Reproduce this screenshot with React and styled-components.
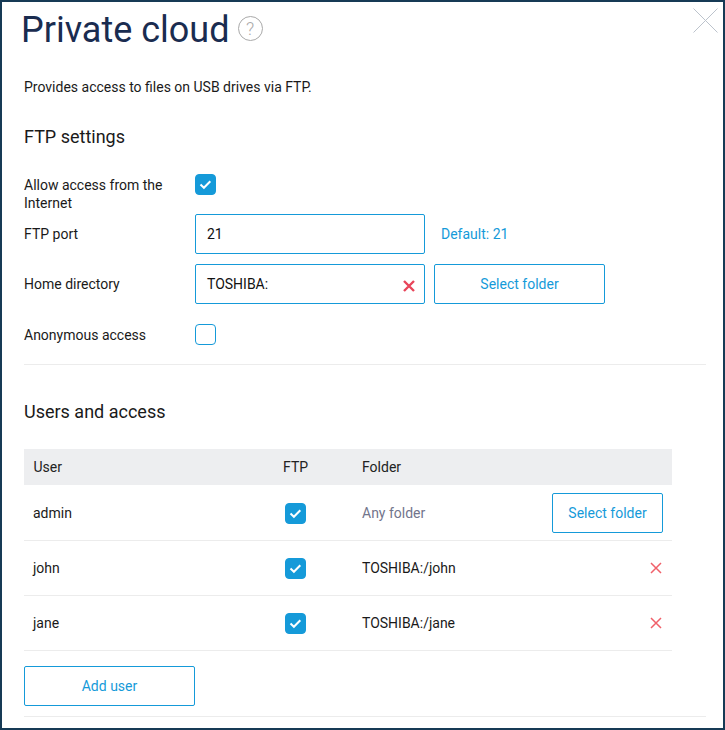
import React from 'react';
import styled, { createGlobalStyle } from 'styled-components';

const GlobalStyle = createGlobalStyle`
  html, body {
    margin: 0;
    padding: 0;
    background: #fff;
  }
  body {
    font-family: Roboto, "Liberation Sans", sans-serif;
    font-size: 14px;
    color: #1a1a1a;
  }
`;

const blue = '#159ad9';

const Popup = styled.div`
  position: relative;
  box-sizing: border-box;
  width: 725px;
  height: 730px;
  border: 2px solid #163a55;
  padding: 0 17px 0 22px;
  overflow: hidden;
  background: #fff;
`;

const TitleRow = styled.div`
  display: flex;
  align-items: center;
  gap: 8px;
  height: 54px;
  margin-left: -3px;
  padding-top: 1px;
`;

const Title = styled.h1`
  margin: 0;
  font-size: 36px;
  font-weight: 400;
  line-height: 54px;
  color: #1a2c50;
`;

const Help = styled.span`
  display: flex;
  align-items: center;
  justify-content: center;
  box-sizing: border-box;
  width: 25px;
  height: 25px;
  margin-top: -3px;
  border: 1px solid #a9a9a9;
  border-radius: 50%;
  font-size: 18px;
  font-weight: 300;
  color: #a9a9a9;
`;

const Close = styled.button`
  position: absolute;
  top: 6px;
  right: 5px;
  width: 25px;
  height: 25px;
  padding: 0;
  border: 0;
  background: none;
`;

const Intro = styled.p`
  margin: 21px 0 0;
  line-height: 18px;
`;

const Heading = styled.h2`
  margin: ${p => p.$top}px 0 0;
  font-size: 18px;
  font-weight: 400;
  line-height: 26px;
`;

const Form = styled.div`
  display: flex;
  flex-direction: column;
  margin-top: 26px;
`;

const FormRow = styled.div`
  display: flex;
  align-items: ${p => (p.$top ? 'flex-start' : 'center')};
  margin-top: ${p => p.$gap || 0}px;
`;

const Label = styled.div`
  flex: none;
  width: 171px;
  padding-right: 20px;
  box-sizing: border-box;
  line-height: 18px;
`;

const Input = styled.div`
  position: relative;
  display: flex;
  align-items: center;
  box-sizing: border-box;
  width: 230px;
  height: 40px;
  padding: 0 11px;
  border: 1px solid ${blue};
  border-radius: 2px;
  color: #111;
`;

const Clear = styled.span`
  position: absolute;
  top: 15px;
  right: 9px;
  display: flex;
`;

const Hint = styled.span`
  margin-left: 16px;
  color: ${blue};
`;

const Button = styled.button`
  box-sizing: border-box;
  width: ${p => p.$width}px;
  height: 40px;
  margin-left: ${p => p.$left || 0}px;
  padding: 0;
  border: 1px solid ${blue};
  border-radius: 2px;
  background: #fff;
  color: ${blue};
  font: inherit;
`;

const Box = styled.span`
  display: flex;
  align-items: center;
  justify-content: center;
  box-sizing: border-box;
  width: 21px;
  height: 21px;
  margin-top: ${p => p.$top || 0}px;
  border: 1px solid ${blue};
  border-radius: 4px;
  background: ${p => (p.$on ? blue : '#fff')};
`;

const Divider = styled.div`
  height: 1px;
  margin-top: ${p => p.$top}px;
  background: #ececec;
`;

const Table = styled.div`
  width: 648px;
  margin-top: 24px;
`;

const Row = styled.div`
  display: grid;
  grid-template-columns: 250px 79px 1fr auto;
  align-items: center;
  box-sizing: border-box;
  height: ${p => p.$height}px;
  padding: 0 9px;
  background: ${p => (p.$head ? '#edeef0' : '#fff')};
  border-bottom: ${p => (p.$head ? '0' : '1px solid #ececec')};
`;

const HeadCell = styled.div`
  color: #222;
  padding-left: ${p => p.$pad || 0}px;
`;

const CheckCell = styled.div`
  padding: 1px 0 0 2px;
`;

const Folder = styled.div`
  color: ${p => (p.$muted ? '#72758c' : '#1a1a1a')};
`;

const Remove = styled.span`
  display: flex;
  margin-right: 1px;
`;

const Footer = styled.div`
  margin-top: 15px;
`;

const Check = () => (
  <svg width="13" height="11" viewBox="0 0 13 11" fill="none">
    <path d="M1.5 5.6 L4.9 8.8 L11.3 2.2" stroke="#fff" strokeWidth="2" />
  </svg>
);

const Cross = ({ size, color, width }) => (
  <svg width={size} height={size} viewBox="0 0 12 12" fill="none">
    <path d="M1 1 L11 11 M11 1 L1 11" stroke={color} strokeWidth={width} />
  </svg>
);

const users = [
  { name: 'john', folder: 'TOSHIBA:/john' },
  { name: 'jane', folder: 'TOSHIBA:/jane' },
];

export default function App() {
  return (
    <>
      <GlobalStyle />
      <Popup>
        <TitleRow>
          <Title>Private cloud</Title>
          <Help>?</Help>
        </TitleRow>
        <Close aria-label="Close">
          <svg width="25" height="25" viewBox="0 0 25 25" fill="none">
            <path d="M0.5 0.5 L24.5 24.5 M24.5 0.5 L0.5 24.5" stroke="#bcc3cc" strokeWidth="1" />
          </svg>
        </Close>

        <Intro>Provides access to files on USB drives via FTP.</Intro>

        <Heading $top={28}>FTP settings</Heading>
        <Form>
          <FormRow $top>
            <Label>Allow access from the Internet</Label>
            <Box $on $top={-2}><Check /></Box>
          </FormRow>
          <FormRow $gap={2}>
            <Label>FTP port</Label>
            <Input>21</Input>
            <Hint>Default: 21</Hint>
          </FormRow>
          <FormRow $gap={10}>
            <Label>Home directory</Label>
            <Input>
              TOSHIBA:
              <Clear><Cross size={12} color="#e8455a" width={2.4} /></Clear>
            </Input>
            <Button $width={171} $left={9}>Select folder</Button>
          </FormRow>
          <FormRow $gap={20}>
            <Label>Anonymous access</Label>
            <Box />
          </FormRow>
        </Form>
        <Divider $top={19} />

        <Heading $top={34}>Users and access</Heading>
        <Table>
          <Row $head $height={36}>
            <HeadCell $pad={0.5}>User</HeadCell>
            <HeadCell>FTP</HeadCell>
            <HeadCell>Folder</HeadCell>
          </Row>
          <Row $height={56}>
            <div>admin</div>
            <CheckCell><Box $on><Check /></Box></CheckCell>
            <Folder $muted>Any folder</Folder>
            <Button $width={111}>Select folder</Button>
          </Row>
          {users.map(u => (
            <Row key={u.name} $height={55}>
              <div>{u.name}</div>
              <CheckCell><Box $on><Check /></Box></CheckCell>
              <Folder>{u.folder}</Folder>
              <Remove><Cross size={12} color="#f0606a" width={1.5} /></Remove>
            </Row>
          ))}
        </Table>
        <Footer>
          <Button $width={171}>Add user</Button>
        </Footer>
        <Divider $top={10} />
      </Popup>
    </>
  );
}
